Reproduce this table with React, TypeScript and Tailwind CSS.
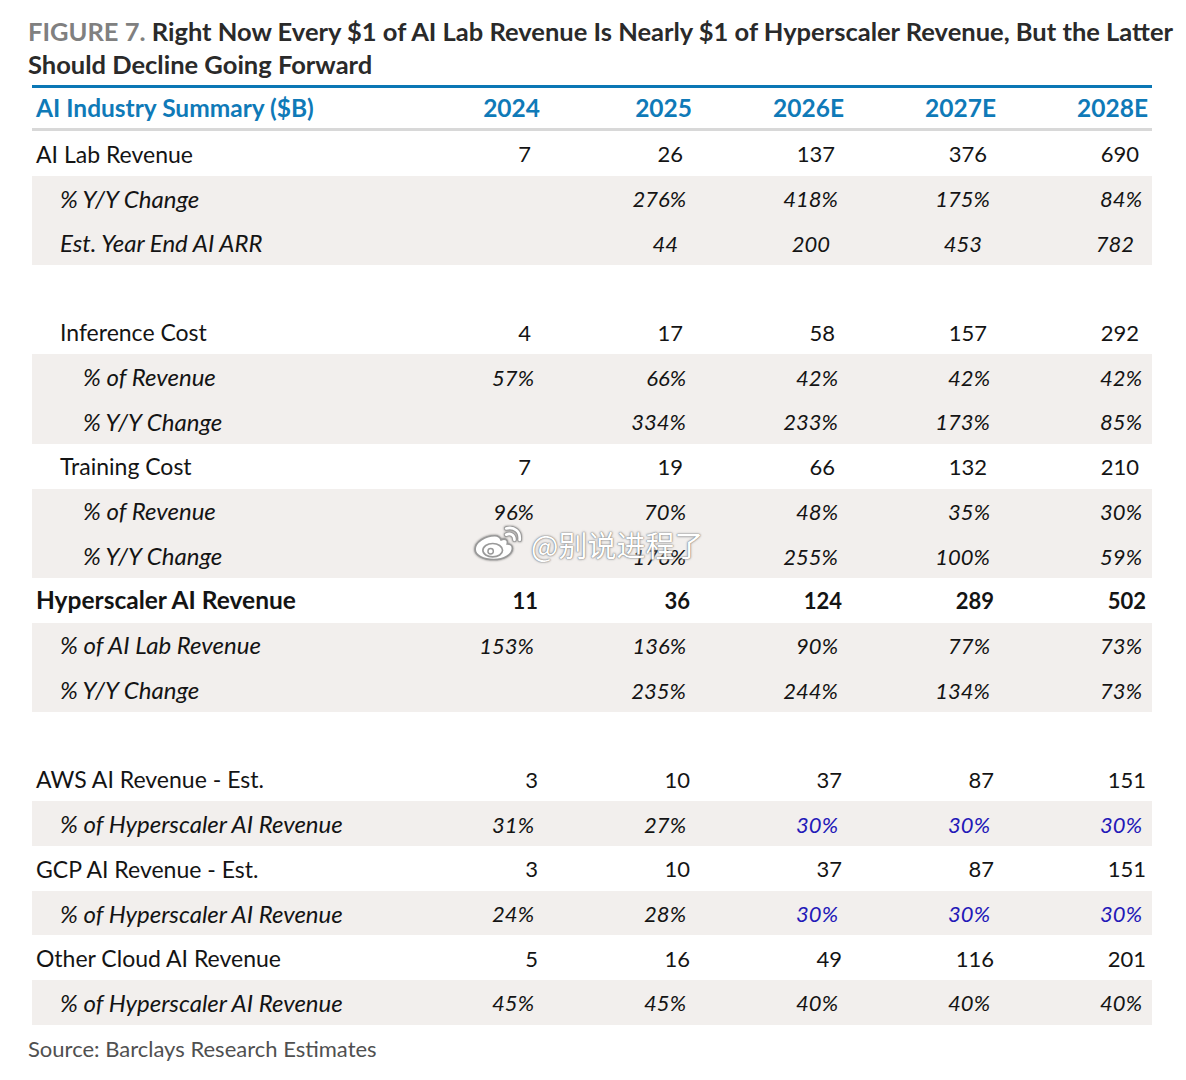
import React from "react";

type Kind = "num" | "pct" | "arr" | "bold" | "est" | "blue";

type Cell = { v: string; k: Kind } | null;

type Row = {
  label: string;
  indent?: 0 | 1 | 2;
  shaded?: boolean;
  bold?: boolean;
  italic?: boolean;
  blank?: boolean;
  cells?: Cell[];
};

const n = (v: string): Cell => ({ v, k: "num" });
const p = (v: string): Cell => ({ v, k: "pct" });
const a = (v: string): Cell => ({ v, k: "arr" });
const b = (v: string): Cell => ({ v, k: "bold" });
const e = (v: string): Cell => ({ v, k: "est" });
const bl = (v: string): Cell => ({ v, k: "blue" });

const rows: Row[] = [
  { label: "AI Lab Revenue", cells: [n("7"), n("26"), n("137"), n("376"), n("690")] },
  { label: "% Y/Y Change", indent: 1, shaded: true, italic: true, cells: [null, p("276%"), p("418%"), p("175%"), p("84%")] },
  { label: "Est. Year End AI ARR", indent: 1, shaded: true, italic: true, cells: [null, a("44"), a("200"), a("453"), a("782")] },
  { label: "", blank: true },
  { label: "Inference Cost", indent: 1, cells: [n("4"), n("17"), n("58"), n("157"), n("292")] },
  { label: "% of Revenue", indent: 2, shaded: true, italic: true, cells: [p("57%"), p("66%"), p("42%"), p("42%"), p("42%")] },
  { label: "% Y/Y Change", indent: 2, shaded: true, italic: true, cells: [null, p("334%"), p("233%"), p("173%"), p("85%")] },
  { label: "Training Cost", indent: 1, cells: [n("7"), n("19"), n("66"), n("132"), n("210")] },
  { label: "% of Revenue", indent: 2, shaded: true, italic: true, cells: [p("96%"), p("70%"), p("48%"), p("35%"), p("30%")] },
  { label: "% Y/Y Change", indent: 2, shaded: true, italic: true, cells: [null, p("176%"), p("255%"), p("100%"), p("59%")] },
  { label: "Hyperscaler AI Revenue", bold: true, cells: [b("11"), b("36"), b("124"), b("289"), b("502")] },
  { label: "% of AI Lab Revenue", indent: 1, shaded: true, italic: true, cells: [p("153%"), p("136%"), p("90%"), p("77%"), p("73%")] },
  { label: "% Y/Y Change", indent: 1, shaded: true, italic: true, cells: [null, p("235%"), p("244%"), p("134%"), p("73%")] },
  { label: "", blank: true },
  { label: "AWS AI Revenue - Est.", cells: [e("3"), e("10"), e("37"), e("87"), e("151")] },
  { label: "% of Hyperscaler AI Revenue", indent: 1, shaded: true, italic: true, cells: [p("31%"), p("27%"), bl("30%"), bl("30%"), bl("30%")] },
  { label: "GCP AI Revenue - Est.", cells: [e("3"), e("10"), e("37"), e("87"), e("151")] },
  { label: "% of Hyperscaler AI Revenue", indent: 1, shaded: true, italic: true, cells: [p("24%"), p("28%"), bl("30%"), bl("30%"), bl("30%")] },
  { label: "Other Cloud AI Revenue", cells: [e("5"), e("16"), e("49"), e("116"), e("201")] },
  { label: "% of Hyperscaler AI Revenue", indent: 1, shaded: true, italic: true, cells: [p("45%"), p("45%"), p("40%"), p("40%"), p("40%")] },
];

const years = ["2024", "2025", "2026E", "2027E", "2028E"];

const cellClass: Record<Kind, string> = {
  num: "pr-[9px]",
  pct: "pr-[6px] italic",
  arr: "pr-[14px] italic",
  bold: "pr-[2px] font-bold",
  est: "pr-[2px]",
  blue: "pr-[6px] italic text-[#2318b8]",
};

const indentClass = ["pl-[4px]", "pl-[28px]", "pl-[51px]"];

const WeiboMark = () => (
  <svg width="58" height="36" viewBox="0 0 56 34" className="drop-shadow-[0_0_1px_rgba(0,0,0,0.5)]">
    <path
      d="M22 9c-9 0-19 6-19 13 0 6 8 10 18 10s18-5 18-11c0-3-3-4-5-4 1-3-1-6-6-4-1-3-3-4-6-4z"
      fill="#fff"
      stroke="#999"
      strokeWidth="1.6"
    />
    <ellipse cx="20" cy="23" rx="9.5" ry="6.5" fill="#fff" stroke="#999" strokeWidth="1.6" />
    <circle cx="18" cy="24" r="2.6" fill="#fff" stroke="#999" strokeWidth="1.4" />
    <path d="M33 8c4-2 8 0 8 5" fill="none" stroke="#999" strokeWidth="4.2" strokeLinecap="round" />
    <path d="M33 8c4-2 8 0 8 5" fill="none" stroke="#fff" strokeWidth="2.6" strokeLinecap="round" />
    <path d="M33 2c8-2 14 3 13 11" fill="none" stroke="#999" strokeWidth="4.2" strokeLinecap="round" />
    <path d="M33 2c8-2 14 3 13 11" fill="none" stroke="#fff" strokeWidth="2.6" strokeLinecap="round" />
  </svg>
);

export default function App(): React.ReactElement {
  return (
    <div className="relative w-[1186px] h-[1080px] bg-white pl-[28px] pt-[15px] font-['Lato',sans-serif] text-[#141414]">
      <h1 className="text-[25.5px] leading-[33px] font-bold text-[#2a2a2a] whitespace-nowrap">
        <span className="text-[#808080]">FIGURE 7.</span> Right Now Every $1 of AI Lab Revenue Is Nearly $1 of
        Hyperscaler Revenue, But the Latter
        <br />
        Should Decline Going Forward
      </h1>

      <div className="ml-[4px] mt-[4px] w-[1120px] border-t-[3px] border-[#0a77b5]">
        <div className="grid grid-cols-[356px_152px_152px_152px_152px_152px] h-[43px] items-center border-b-[3px] border-[#d8d8d8] text-[24.5px] font-bold text-[#0f7ab8]">
          <div className="pl-[4px]">AI Industry Summary ($B)</div>
          {years.map((y) => (
            <div key={y} className="text-right">
              {y}
            </div>
          ))}
        </div>

        {rows.map((r, i) => (
          <div
            key={i}
            className={`grid grid-cols-[356px_152px_152px_152px_152px_152px] h-[44.7px] items-center pt-[1px] text-[22px] ${
              r.shaded ? "bg-[#f2efed]" : ""
            }`}
          >
            {!r.blank && (
              <>
                <div
                  className={`${indentClass[r.indent ?? 0]} ${
                    r.bold ? "font-bold text-[24.5px]" : r.italic ? "italic text-[24px]" : "text-[23px]"
                  }`}
                >
                  {r.label}
                </div>
                {r.cells!.map((c, j) => (
                  <div key={j} className={`text-right ${c ? cellClass[c.k] : ""}`}>
                    {c ? c.v : ""}
                  </div>
                ))}
              </>
            )}
          </div>
        ))}
      </div>

      <p className="mt-[7px] text-[22px] text-[#505050]">Source: Barclays Research Estimates</p>

      <div className="absolute left-[472px] top-[526px] flex items-center gap-[1px] pointer-events-none">
        <WeiboMark />
        <span className="font-['Noto_Sans_CJK_SC',sans-serif] text-[29px] leading-none text-white [text-shadow:0_0_1px_#666,0_0_2px_#999,0_0_3px_#bbb]">
          @别说进程了
        </span>
      </div>
    </div>
  );
}
